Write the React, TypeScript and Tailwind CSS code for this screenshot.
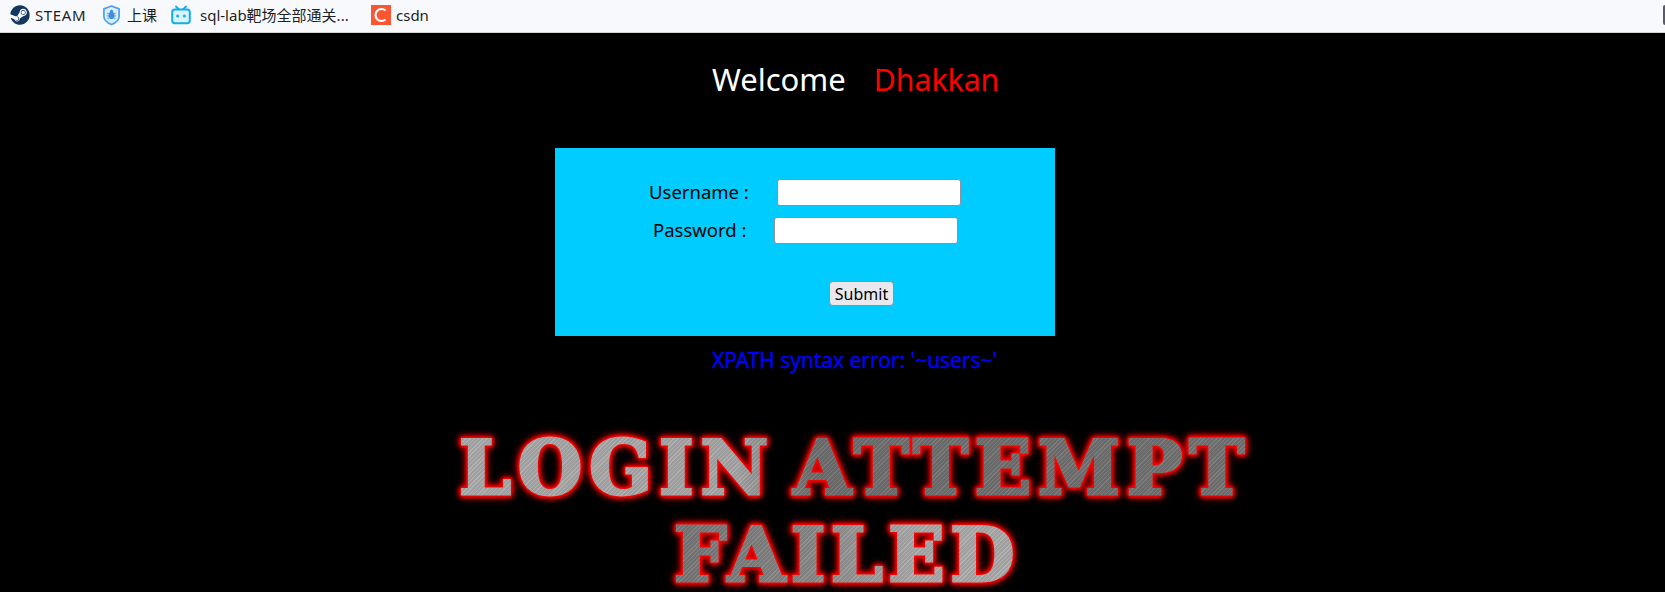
import { FaSteam } from "react-icons/fa";

const SANS = "font-['Noto_Sans','Noto_Sans_CJK_SC',sans-serif]";

function ShieldIcon() {
  return (
    <svg viewBox="0 0 20 22" className="h-[22px] w-[19px]">
      <path d="M10 1.500 18 4.500v8c0 4-4 6.800-8 8.500-4-1.700-8-4.500-8-8.500v-8z" fill="#dcecfd" stroke="#4aa3f5" strokeWidth="1.800" strokeLinejoin="round" />
      <ellipse cx="10" cy="11.500" rx="3" ry="3.800" fill="#3d8fe0" />
      <circle cx="10" cy="7.300" r="1.700" fill="#3d8fe0" />
      <path d="M5.500 9 7.500 10M14.500 9l-2 1M5.200 12h2.300M14.800 12h-2.300M5.800 15l2-1.300M14.200 15l-2-1.300" stroke="#3d8fe0" strokeWidth="1" />
    </svg>
  );
}

function TvIcon() {
  return (
    <svg viewBox="0 0 20 20" className="h-5 w-5">
      <path d="M5 1.500 8 4.500M15 1.500 12 4.500" stroke="#12aee8" strokeWidth="1.800" strokeLinecap="round" />
      <rect x="1.200" y="4.600" width="17.600" height="13.600" rx="2.600" fill="#d9f3fc" stroke="#12aee8" strokeWidth="2" />
      <circle cx="6.600" cy="11" r="1.500" fill="#12aee8" />
      <circle cx="13.400" cy="11" r="1.500" fill="#12aee8" />
    </svg>
  );
}

function CsdnIcon() {
  return (
    <svg viewBox="0 0 20 20" className="h-5 w-5">
      <rect width="20" height="20" fill="#fc5531" />
      <path d="M14.500 5.500A6 6 0 1 0 14.500 14.500" fill="none" stroke="#fff" strokeWidth="2.200" />
    </svg>
  );
}

function Bookmarks() {
  return (
    <div className={`${SANS} relative flex h-[33px] items-center border-b border-[#d4d4d8] bg-[#f8f9fd] pb-[2px] pl-[10px] text-[15px] text-[#1f1f1f]`}>
      <div className="flex w-[92px] items-center gap-[5px]">
        <FaSteam className="text-[20px] text-[#14375f]" />
        <span className="tracking-[0.6px]">STEAM</span>
      </div>
      <div className="flex w-[69px] items-center gap-[6px]">
        <ShieldIcon />
        <span>上课</span>
      </div>
      <div className="flex w-[200px] items-center gap-[9px]">
        <TvIcon />
        <span>sql-lab靶场全部通关...</span>
      </div>
      <div className="flex items-center gap-[5px]">
        <CsdnIcon />
        <span>csdn</span>
      </div>
      <div className="absolute top-[5px] right-0 h-5 w-[2px] rounded-l-sm bg-[#5a5a66]" />
    </div>
  );
}

function Field({ label, rowClass, labelClass }: { label: string; rowClass: string; labelClass: string }) {
  return (
    <div className={`flex h-[38px] items-center ${rowClass}`}>
      <label className={`${labelClass} text-[18.500px] whitespace-nowrap text-black`}>{label}</label>
      <input type="text" className="h-[27px] w-[184px] rounded-[3px] border border-[#8f8f9d] bg-white" />
    </div>
  );
}

export default function App() {
  return (
    <div className={`${SANS} h-[592px] bg-black`}>
      <Bookmarks />

      <div className="mt-[23px] ml-[712px] flex h-[46px] items-baseline gap-[28px] text-[31px]">
        <span className="text-white">Welcome</span>
        <span className="text-[30.200px] text-[#ff0000]">Dhakkan</span>
      </div>

      <form className="mt-[46px] ml-[555px] h-[188px] w-[500px] bg-[#00ccff] pt-[25px]">
        <Field label="Username :" rowClass="pl-[94px]" labelClass="w-[128px]" />
        <Field label="Password :" rowClass="pl-[98px]" labelClass="w-[121px]" />
        <div className="mt-[32px] pl-[274px]">
          <button type="button" className="h-[25px] w-[65px] rounded-[4px] border border-[#8f8f9d] bg-[#e9e9ed] text-[16px] text-black">
            Submit
          </button>
        </div>
      </form>

      <p className="mt-[9px] ml-[712px] text-[20.900px] whitespace-nowrap text-[#0000ff] [-webkit-text-stroke:0.3px_#0000ff]">XPATH syntax error: '~users~'</p>

      <div className="mt-[56px] flex flex-col items-center gap-[15px] pl-[45px] font-['DejaVu_Serif',serif] text-[74px] leading-[72px] font-bold [word-spacing:-14px] [-webkit-text-stroke:3px_transparent]">
        <span className="bg-[repeating-linear-gradient(135deg,#ffffff12_0_1px,#00000012_1px_3px),linear-gradient(90deg,#adadad_0%,#a8a8a8_35%,#6f6f6f_45%,#757575_100%)] bg-clip-text tracking-[6.800px] whitespace-nowrap text-transparent [filter:drop-shadow(0_0_1px_#f00)_drop-shadow(0_0_1px_#f00)_drop-shadow(0_0_2px_#f00)_drop-shadow(0_0_3px_#e00)]">
          LOGIN ATTEMPT
        </span>
        <span className="-ml-[16px] bg-[repeating-linear-gradient(135deg,#ffffff12_0_1px,#00000012_1px_3px),linear-gradient(90deg,#777777_0%,#8a8a8a_40%,#adadad_70%,#adadad_100%)] bg-clip-text tracking-[5.500px] whitespace-nowrap text-transparent [filter:drop-shadow(0_0_1px_#f00)_drop-shadow(0_0_1px_#f00)_drop-shadow(0_0_2px_#f00)_drop-shadow(0_0_3px_#e00)]">
          FAILED
        </span>
      </div>
    </div>
  );
}
